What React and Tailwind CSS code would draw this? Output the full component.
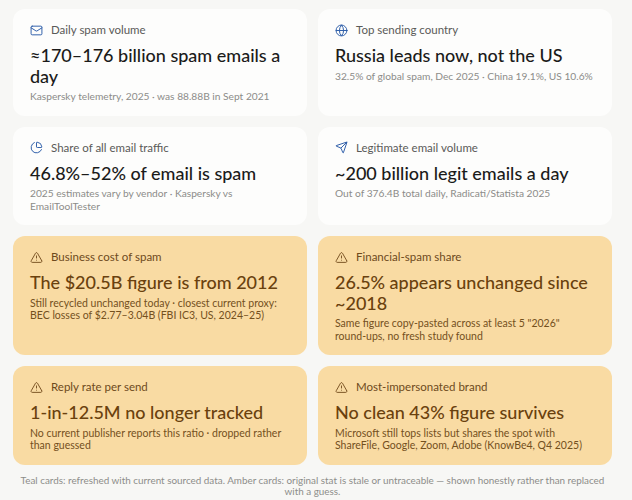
import React from 'react';
import { Mail, Globe, PieChart, Send, TriangleAlert } from 'lucide-react';

const cards = [
  { tone: 'teal', Icon: Mail, label: 'Daily spam volume', title: '≈170–176 billion spam emails a day', sub: 'Kaspersky telemetry, 2025 · was 88.88B in Sept 2021' },
  { tone: 'teal', Icon: Globe, label: 'Top sending country', title: 'Russia leads now, not the US', sub: '32.5% of global spam, Dec 2025 · China 19.1%, US 10.6%' },
  { tone: 'teal', Icon: PieChart, label: 'Share of all email traffic', title: '46.8%–52% of email is spam', sub: '2025 estimates vary by vendor · Kaspersky vs EmailToolTester' },
  { tone: 'teal', Icon: Send, label: 'Legitimate email volume', title: '~200 billion legit emails a day', sub: 'Out of 376.4B total daily, Radicati/Statista 2025' },
  { tone: 'amber', Icon: TriangleAlert, label: 'Business cost of spam', title: 'The $20.5B figure is from 2012', sub: 'Still recycled unchanged today · closest current proxy: BEC losses of $2.77–3.04B (FBI IC3, US, 2024–25)' },
  {
    tone: 'amber', Icon: TriangleAlert, label: 'Financial-spam share', title: '26.5% appears unchanged since ~2018',
    sub: <>Same figure copy-pasted across at least 5 "2026" <span className="whitespace-nowrap">round-ups,</span> no fresh study found</>,
  },
  { tone: 'amber', Icon: TriangleAlert, label: 'Reply rate per send', title: '1-in-12.5M no longer tracked', sub: 'No current publisher reports this ratio · dropped rather than guessed' },
  { tone: 'amber', Icon: TriangleAlert, label: 'Most-impersonated brand', title: 'No clean 43% figure survives', sub: 'Microsoft still tops lists but shares the spot with ShareFile, Google, Zoom, Adobe (KnowBe4, Q4 2025)' },
];

function StatCard({ tone, Icon, label, title, sub }) {
  const amber = tone === 'amber';
  return (
    <div className={"rounded-xl pl-[17px] pr-3 pt-[13px] pb-[13px] flex flex-col " + (amber ? "bg-[#f9dba3]" : "bg-[#fdfdfc]")}>
      <div className="flex items-center gap-2 h-4">
        <Icon className={"w-[13px] h-[13px] " + (amber ? "text-[#7a5324]" : "text-[#2d5ea9]")} strokeWidth={1.8} aria-hidden />
        <span className={"text-[11.5px] leading-4 " + (amber ? "text-[#6e4a1c]" : "text-[#5a5a58]")}>{label}</span>
      </div>
      <div className={"mt-[7px] text-[18px] leading-[20.5px] font-medium " + (amber ? "text-[#6a410e]" : "text-[#1b1b1a]")}>{title}</div>
      <div className={"mt-1 leading-[12.5px] " + (amber ? "text-[10.5px] text-[#74501d]" : "text-[10.2px] text-[#8c8c89]")}>{sub}</div>
    </div>
  );
}

export default function App() {
  return (
    <div className="min-h-screen bg-[#f7f7f5] pl-[13px] pr-[20px] pt-[9px] pb-2" style={{ fontFamily: 'Lato, "Noto Sans", sans-serif' }}>
      <div className="grid grid-cols-2 gap-[11px]">
        {cards.map((c) => <StatCard key={c.label} {...c} />)}
      </div>
      <p className="mt-[10px] text-center text-[9.9px] leading-[11.5px] text-[#8d8d8a]">
        Teal cards: refreshed with current sourced data. Amber cards: original stat is stale or untraceable — shown honestly rather than replaced with a guess.
      </p>
    </div>
  );
}
